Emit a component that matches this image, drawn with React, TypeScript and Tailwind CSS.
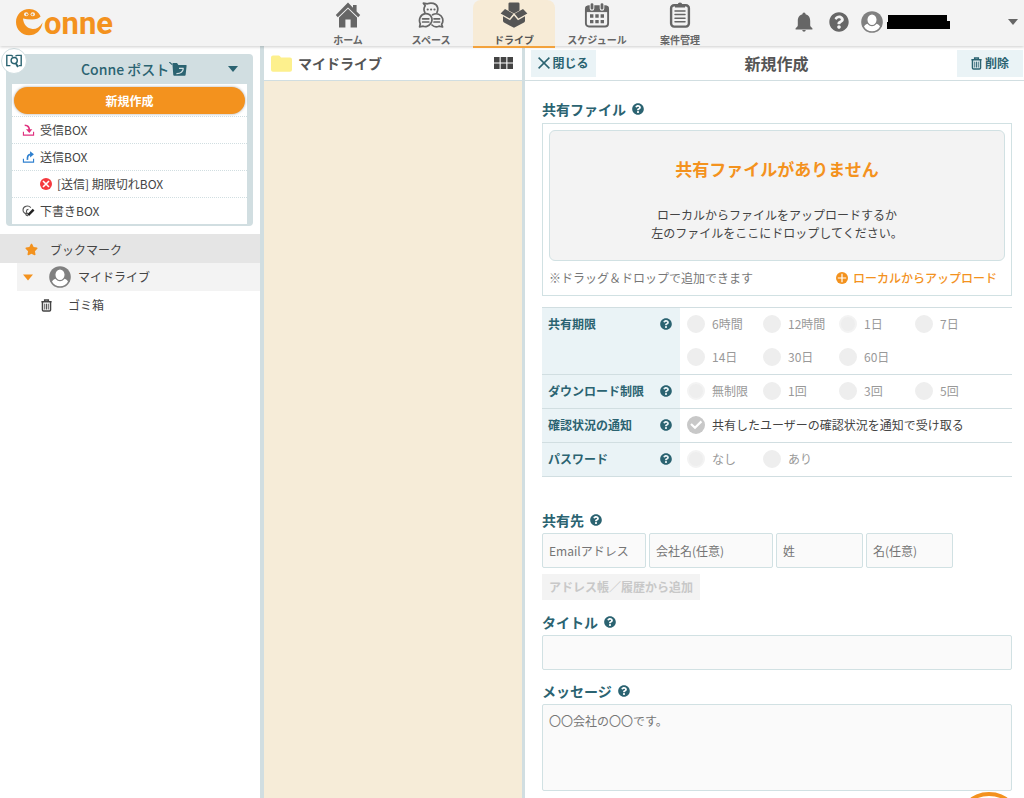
import type { ReactNode } from 'react';
import { FaQuestionCircle, FaStar } from 'react-icons/fa';
import { clsx } from 'clsx';

function HomeIcon() {
  return (
    <svg viewBox="0 0 26 26" className="h-[26px] w-[26px] shrink-0" fill="currentColor">
      <path d="M13 .6 L.8 13 L2.8 15.2 L13 5.4 L23.2 15.2 L25.2 13 L21.6 9.4 V3 H18 V5.8 Z" />
      <path d="M13 6.8 L4 15.6 V25.4 H10.4 V17.4 H15.6 V25.4 H22 V15.6 Z" />
    </svg>
  );
}

function SpaceIcon() {
  return (
    <svg viewBox="0 0 26 26" className="h-[26px] w-[26px] shrink-0" fill="none" stroke="currentColor" strokeWidth="1.7" strokeLinejoin="round" strokeLinecap="round">
      <path d="M6.8 10.4 C5.6 8 5.8 5.6 7.2 3.8 L5.4 1.2 L9.4 1.8 C13 .2 18.4 1.2 19.6 5.4 C20.2 7.6 19.6 9 19 10.4" />
      <path d="M1.6 24.8 L2.3 21.8 C.2 17.6 2.4 12.2 7.4 11.7 C13.2 11.4 15.6 17.3 12.7 21.6 C10.6 24.8 7 25 5.2 24.2 Z" />
      <path d="M14.6 12.8 C18.6 10.4 23.4 12.4 24.6 16.6 C25.2 19 24.6 21 23.6 22.2 L24.6 25 L21 24.2 C18.4 25.2 15.6 24.6 14 23" />
      <path d="M4.6 16.8 H10.8 M4.6 20 H10.8 M16 16.8 H21.6 M16 20 H21.6" />
      <path d="M9.6 7.6 H9.8 M13 7.6 H13.2 M16.4 7.6 H16.6" strokeWidth="2" />
    </svg>
  );
}

function DriveIcon() {
  return (
    <svg viewBox="0 0 28 26" className="h-[26px] w-7 shrink-0" fill="currentColor">
      <path d="M8.5 1.8 Q8.5 .4 9.9 .4 H18.1 Q19.5 .4 19.5 1.8 V8.4 L14 11.4 L8.5 8.4 Z" />
      <path d="M5 6.9 L13.4 11.8 L9.6 16.6 L.6 11.6 Z M23 6.9 L14.6 11.8 L18.4 16.6 L27.4 11.6 Z" />
      <path d="M3 14.2 L10 18.2 L14 13.4 L18 18.2 L25 14.2 V18.8 Q25 20 24 20.6 L14 25.8 L4 20.6 Q3 20 3 18.8 Z" />
    </svg>
  );
}

function CalendarIcon() {
  return (
    <svg viewBox="0 0 26 26" className="h-[26px] w-[26px] shrink-0" fill="none" stroke="currentColor">
      <rect x="1.9" y="4.1" width="22.2" height="20.4" rx="3" strokeWidth="1.9" />
      <path d="M2 4.6 H24 V9.6 H2 Z" fill="currentColor" />
      <path d="M8 2.6 V6.4 M18 2.6 V6.4" stroke="#f3f3f3" strokeWidth="4.6" strokeLinecap="round" />
      <path d="M8 2.6 V6.2 M18 2.6 V6.2" strokeWidth="2.8" strokeLinecap="round" />
      <path d="M6 14 H20 M6 19.6 H20" strokeWidth="3.4" strokeDasharray="3.4 1.9" />
    </svg>
  );
}

function ClipboardIcon() {
  return (
    <svg viewBox="0 0 22 26" className="h-[26px] w-[22px] shrink-0" fill="none" stroke="currentColor">
      <rect x="2.1" y="3.2" width="17.8" height="21.4" rx="3" strokeWidth="2.4" />
      <path d="M6 5.6 V2.8 H8.6 Q9 .4 11 .4 Q13 .4 13.4 2.8 H16 V5.6 Z" fill="currentColor" stroke="none" />
      <path d="M6 9 H16 M6 12.6 H16 M6 16.2 H16 M6 19.8 H16" strokeWidth="1.5" strokeLinecap="round" />
    </svg>
  );
}

function BellIcon() {
  return (
    <svg viewBox="0 0 18 20" className="h-5 w-[18px]" fill="currentColor">
      <path d="M9 .4 Q10.6 .4 10.6 2.2 C14 3 15.2 5.8 15.2 9 V13.6 Q15.2 14.6 17.4 16.2 V17.4 H.6 V16.2 Q2.8 14.6 2.8 13.6 V9 C2.8 5.8 4 3 7.4 2.2 Q7.4 .4 9 .4 Z M7.2 18 H10.8 Q10.6 19.8 9 19.8 Q7.4 19.8 7.2 18 Z" />
    </svg>
  );
}

function AvatarIcon() {
  return (
    <svg viewBox="0 0 22 22" className="h-[22px] w-[22px] text-[#808080]">
      <circle cx="11" cy="11" r="10.8" fill="currentColor" />
      <path d="M11 20.2 C7.4 20.2 4.4 18.2 3 15.4 C4.4 13.4 6.2 12.6 7.6 12.6 H14.4 C15.8 12.6 17.6 13.4 19 15.4 C17.6 18.2 14.6 20.2 11 20.2 Z" fill="#fff" />
      <ellipse cx="11" cy="8.7" rx="5.2" ry="5.9" fill="#fff" stroke="currentColor" strokeWidth="1.3" />
    </svg>
  );
}

function TrashIcon() {
  return (
    <svg viewBox="0 0 12 14" className="h-[13px] w-[11px]" fill="none" stroke="currentColor" strokeWidth="1.6">
      <path d="M.4 3 H11.6 M4 2.6 V1 H8 V2.6 M1.6 3.4 V12 Q1.6 13.1 2.8 13.1 H9.2 Q10.4 13.1 10.4 12 V3.4" />
      <path d="M4.1 5 V11.4 M6 5 V11.4 M7.9 5 V11.4" strokeWidth="1" />
    </svg>
  );
}

function Caret({ className }: { className?: string }) {
  return (
    <svg viewBox="0 0 12 7" className={clsx('h-[6px] w-[10px]', className)} fill="currentColor">
      <path d="M0 0 H12 L6 7 Z" />
    </svg>
  );
}

function InboxIcon() {
  return (
    <svg viewBox="0 0 13 13" className="h-3 w-[13px]" fill="none" stroke="#e0307f" strokeWidth="1.8">
      <path d="M1 8.4 V12 H12 V8.4" strokeWidth="1.2" />
      <path d="M2.4 1.4 Q7.6 1.6 7.4 7" />
      <path d="M3.8 5.6 L7.4 9.8 L10.6 5.6 Z" fill="#e0307f" stroke="none" />
    </svg>
  );
}

function OutboxIcon() {
  return (
    <svg viewBox="0 0 13 13" className="h-3 w-[13px]" fill="none" stroke="#2f80cf" strokeWidth="1.8">
      <path d="M1 8.4 V12 H12 V8.4" strokeWidth="1.2" />
      <path d="M5.4 9.6 Q4.8 3.6 9 3.6" />
      <path d="M8.2 .2 L12.4 3.6 L8.2 7 Z" fill="#2f80cf" stroke="none" />
    </svg>
  );
}

function ExpiredIcon() {
  return (
    <svg viewBox="0 0 12 12" className="h-3 w-3">
      <circle cx="6" cy="6" r="6" fill="#f5393f" />
      <path d="M3 3 L9 9 M9 3 L3 9" stroke="#fff" strokeWidth="1.6" />
    </svg>
  );
}

function DraftIcon() {
  return (
    <svg viewBox="0 0 13 12" className="h-3 w-[13px]" fill="none" stroke="#555">
      <path d="M8.8 2.6 C6.4 -.2 1 1 1 5 C1 8 3.6 9 5.4 8.4 C4 7.4 4 4.4 6.4 4.4 M3.4 9 Q4.4 11 6 10.6" strokeWidth="1.1" />
      <path d="M6.2 10.2 L11.6 4.6" stroke="#222" strokeWidth="2.4" />
    </svg>
  );
}

function Help() {
  return (
    <button type="button" aria-label="ヘルプ" className="shrink-0">
      <FaQuestionCircle className="h-3 w-3 text-[#2b6371]" />
    </button>
  );
}

const navItems = [
  { label: 'ホーム', icon: HomeIcon },
  { label: 'スペース', icon: SpaceIcon },
  { label: 'ドライブ', icon: DriveIcon, active: true },
  { label: 'スケジュール', icon: CalendarIcon },
  { label: '案件管理', icon: ClipboardIcon },
];

function Header() {
  return (
    <header className="z-10 flex h-[46px] shrink-0 items-start bg-[#f3f3f3] shadow-[0_1px_3px_rgba(0,0,0,0.2)]">
      <a href="#" aria-label="Conne" className="flex h-[46px] w-[307px] shrink-0 pl-4 text-[#f3921e]">
        <svg viewBox="0 0 27 27" className="mt-[9px] h-[27px] w-[27px]" fill="currentColor">
          <path d="M24.6 7.6 C23 3 18.4 0 13.2 0 C5.6 0 0 5.8 0 13 C0 20.4 5.6 26.2 13 26.2 C20 26.2 25.4 21.4 26.6 13.4 C23.8 18 20.4 20.2 16.6 20 C11 19.6 7.4 15.4 7 9.6 Q10.6 10.6 16 10.6 Q22 10.6 24.6 7.6 Z" />
          <ellipse cx="10.2" cy="5.2" rx="2.2" ry="2" fill="#f3f3f3" />
          <ellipse cx="16.8" cy="5.2" rx="2.2" ry="2" fill="#f3f3f3" />
          <circle cx="10.8" cy="5.5" r="1" />
          <circle cx="16.4" cy="5.5" r="1" />
        </svg>
        <span className="ml-px font-['Roboto',sans-serif] text-[31px] leading-[48px] font-bold">onne</span>
      </a>
      <nav className="flex gap-px">
        {navItems.map((item) => (
          <a
            key={item.label}
            href="#"
            className={clsx(
              'flex h-12 w-[82px] flex-col items-center gap-1 pt-[2px] text-[10px] font-bold',
              item.active ? 'rounded-t-lg border-b-2 border-[#f3a23c] bg-[#f7ebd6] text-[#555]' : 'text-[#666]'
            )}
          >
            <item.icon />
            <span className="shrink-0 leading-4">{item.label}</span>
          </a>
        ))}
      </nav>
      <div className="ml-auto flex h-11 items-center text-[#666]">
        <button type="button" aria-label="通知">
          <BellIcon />
        </button>
        <button type="button" aria-label="ヘルプ" className="ml-4">
          <FaQuestionCircle className="h-5 w-5" />
        </button>
        <button type="button" aria-label="アカウント" className="ml-3 flex items-center pr-[6px]">
          <AvatarIcon />
          <svg viewBox="0 0 63 15" className="ml-1 h-[15px] w-[63px]" fill="#000">
            <path d="M1 0 H60 V6 H63 V14 H0 V7 H1 Z" />
          </svg>
          <Caret className="ml-[58px]" />
        </button>
      </div>
    </header>
  );
}

const boxes = [
  { label: '受信BOX', icon: InboxIcon },
  { label: '送信BOX', icon: OutboxIcon },
  { label: '[送信] 期限切れBOX', icon: ExpiredIcon, nested: true },
  { label: '下書きBOX', icon: DraftIcon },
];

function Sidebar() {
  return (
    <aside className="w-[264px] shrink-0 border-r-4 border-[#d1dee1] pt-2">
      <section className="relative ml-[6px] w-[247px] rounded-[4px] bg-[#d1dee1] px-[6px] pb-[2px]">
        <button
          type="button"
          aria-label="検索"
          className="absolute -top-[6px] -left-[5px] flex h-[26px] w-[26px] items-center justify-center rounded-full border border-[#d1dee1] bg-white text-[#2b6371]"
        >
          <svg viewBox="0 0 16 14" className="h-[14px] w-4" fill="none" stroke="currentColor" strokeWidth="1.4">
            <path d="M4.4 11.6 H.8 V1.4 H5.4 L7 2.4 M9.4 2.2 L11 1.4 H15.2 V11.6 H12.6" />
            <circle cx="8.2" cy="6.6" r="3.1" />
            <path d="M9.8 9.2 L12 13" strokeWidth="1.9" />
          </svg>
        </button>
        <button type="button" className="flex h-[30px] w-full items-center pr-[9px] pl-[69px] text-sm font-medium text-[#2b6371]">
          Conne ポスト
          <svg viewBox="0 0 18 14" className="h-[14px] w-[18px]" fill="currentColor">
            <path d="M3.4 1.8 Q3.4 1 4.2 1 H8 L9.4 3 H17 Q17.8 3 17.6 3.8 L16.6 13 Q16.5 13.8 15.7 13.8 H5.2 Q4.4 13.8 4.3 13 Z" />
            <path d="M.2 0 L3.2 2.6" stroke="currentColor" strokeWidth="1.2" />
            <path d="M7.4 11.6 Q13.6 11.8 14.4 6.4 M10 6.4 H14.6" fill="none" stroke="#d1dee1" strokeWidth="1.2" />
          </svg>
          <Caret className="ml-auto" />
        </button>
        <div className="bg-white">
          <div className="px-[2px] pt-[3px] pb-[2px]">
            <button type="button" className="block h-[27px] w-full rounded-full bg-[#f3921e] text-xs font-bold text-white shadow-[0_0_3px_rgba(0,0,0,0.35)]">
              新規作成
            </button>
          </div>
          <ul>
            {boxes.map((box) => (
              <li key={box.label} className="border-t border-dotted border-[#d1dee1]">
                <a
                  href="#"
                  className={clsx('flex h-[26px] items-center gap-[5px] text-xs text-[#444]', box.nested ? 'pl-7' : 'pl-[10px]')}
                >
                  <box.icon />
                  {box.label}
                </a>
              </li>
            ))}
          </ul>
        </div>
      </section>
      <nav className="mt-2 text-xs text-[#444]">
        <a href="#" className="flex h-[29px] items-center gap-3 bg-[#e5e5e5] pt-[2px] pl-[25px]">
          <FaStar className="h-[13px] w-[13px] text-[#f3921e]" />
          ブックマーク
        </a>
        <a href="#" className="ml-[17px] flex h-7 items-center bg-[#f3f3f3] pl-[6px]">
          <Caret className="h-[7px] w-3 text-[#f3921e]" />
          <span className="mr-[7px] ml-4">
            <AvatarIcon />
          </span>
          マイドライブ
        </a>
        <a href="#" className="flex h-7 items-center gap-4 pl-[41px]">
          <TrashIcon />
          ゴミ箱
        </a>
      </nav>
    </aside>
  );
}

function FolderPane() {
  return (
    <section className="flex w-[261px] shrink-0 flex-col border-r-[3px] border-[#d1dee1] bg-[#f6ecd8]">
      <div className="flex h-[35px] shrink-0 items-center border-b border-[#d1dee1] bg-white pr-[9px] pl-[7px]">
        <svg viewBox="0 0 21 17" className="h-[17px] w-[21px]" fill="#fdf08d">
          <path d="M0 2.4 Q0 .4 2 .4 H7.6 Q8.6 .4 9.2 1.4 L10 2.4 H19 Q21 2.4 21 4.4 V14.8 Q21 16.8 19 16.8 H2 Q0 16.8 0 14.8 Z" />
        </svg>
        <h2 className="ml-[6px] text-sm font-bold text-[#555]">マイドライブ</h2>
        <button type="button" aria-label="表示切替" className="ml-auto text-[#444]">
          <svg viewBox="0 0 19 12" className="h-3 w-[19px]" fill="currentColor">
            <path d="M0 0 H5.6 V5.5 H0 Z M6.7 0 H12.3 V5.5 H6.7 Z M13.4 0 H19 V5.5 H13.4 Z M0 6.5 H5.6 V12 H0 Z M6.7 6.5 H12.3 V12 H6.7 Z M13.4 6.5 H19 V12 H13.4 Z" />
          </svg>
        </button>
      </div>
    </section>
  );
}

function SectionTitle({ children, htmlFor }: { children: ReactNode; htmlFor?: string }) {
  return (
    <div className="flex h-6 items-center gap-[6px] text-sm font-bold text-[#2b6371]">
      {htmlFor ? <label htmlFor={htmlFor}>{children}</label> : <h3>{children}</h3>}
      <Help />
    </div>
  );
}

function SettingRow({ title, children }: { title: string; children: ReactNode }) {
  return (
    <tr className="border-b border-[#d1dee1]">
      <th scope="row" className="w-[138px] bg-[#eaf3f6] pt-[6px] pr-2 pb-[7px] pl-[6px] text-left align-top font-bold text-[#2b6371]">
        <div className="flex h-5 items-center justify-between whitespace-nowrap">
          {title}
          <Help />
        </div>
      </th>
      <td className="pt-[6px] pb-[7px] pl-[7px] align-top">{children}</td>
    </tr>
  );
}

function RadioGroup({ name, options, selected }: { name: string; options: string[]; selected: string }) {
  return (
    <div className="flex max-w-[310px] flex-wrap gap-y-[13px]">
      {options.map((option) => (
        <label key={option} className="flex h-5 w-[76px] items-center gap-[7px] whitespace-nowrap text-[#999]">
          <input
            type="radio"
            name={name}
            disabled
            defaultChecked={option === selected}
            className="h-[18px] w-[18px] shrink-0 appearance-none rounded-full border-2 border-[#eee] bg-[#eee] checked:border-[#f3f3f3]"
          />
          {option}
        </label>
      ))}
    </div>
  );
}

const recipientFields = [
  { placeholder: 'Emailアドレス', width: 'w-[104px]' },
  { placeholder: '会社名(任意)', width: 'w-[124px]' },
  { placeholder: '姓', width: 'w-[87px]' },
  { placeholder: '名(任意)', width: 'w-[87px]' },
];

const FIELD = 'rounded-[2px] border border-[#d1e1e3] bg-[#fafafa] px-[6px] text-xs text-[#444] placeholder:text-[#757575]';

function SharePane() {
  return (
    <main className="min-w-0 flex-1">
      <div className="flex h-[35px] items-center justify-between border-b border-[#d1dee1] pl-[6px] pr-px text-xs font-bold text-[#2b6371]">
        <button type="button" className="flex h-[27px] w-[65px] items-center justify-center gap-[2px] bg-[#eaf3f6]">
          <svg viewBox="0 0 12 12" className="h-3 w-3" stroke="currentColor" strokeWidth="1.5">
            <path d="M.6 .6 L11.4 11.4 M11.4 .6 L.6 11.4" />
          </svg>
          閉じる
        </button>
        <h1 className="text-base text-[#555]">新規作成</h1>
        <button type="button" className="flex h-[27px] w-[66px] items-center justify-center gap-[3px] bg-[#eaf3f6]">
          <TrashIcon />
          削除
        </button>
      </div>

      <form className="pt-4 pr-3 pl-[17px] text-xs">
        <SectionTitle>共有ファイル</SectionTitle>
        <div className="mt-[2px] border border-[#d1e1e3] px-[6px] pt-[6px]">
          <div className="flex h-[131px] flex-col items-center rounded-md border border-[#d1e1e3] bg-[#f3f3f3] pt-[26px] text-center">
            <p className="text-[17px] leading-6 font-bold text-[#f3921e]">共有ファイルがありません</p>
            <p className="mt-[25px] leading-[18px] text-[#444]">
              ローカルからファイルをアップロードするか
              <br />
              左のファイルをここにドロップしてください。
            </p>
          </div>
          <div className="flex h-[34px] items-center justify-between pr-2">
            <p className="text-[#777]">※ドラッグ＆ドロップで追加できます</p>
            <button type="button" className="flex items-center gap-[5px] font-medium text-[#f3921e]">
              <svg viewBox="0 0 12 12" className="h-3 w-3">
                <circle cx="6" cy="6" r="6" fill="currentColor" />
                <path d="M6 1.8 V10.2 M1.8 6 H10.2" stroke="#fff" strokeWidth="1.2" />
              </svg>
              ローカルからアップロード
            </button>
          </div>
        </div>

        <table className="mt-[11px] w-full table-fixed border-collapse border-t border-[#d1dee1]">
          <tbody>
            <SettingRow title="共有期限">
              <RadioGroup name="expire" selected="1日" options={['6時間', '12時間', '1日', '7日', '14日', '30日', '60日']} />
            </SettingRow>
            <SettingRow title="ダウンロード制限">
              <RadioGroup name="limit" selected="無制限" options={['無制限', '1回', '3回', '5回']} />
            </SettingRow>
            <SettingRow title="確認状況の通知">
              <label className="relative flex h-5 items-center gap-[7px] whitespace-nowrap text-[#444]">
                <input type="checkbox" defaultChecked className="h-[18px] w-[18px] appearance-none rounded-full bg-[#c8c8c8]" />
                <svg viewBox="0 0 18 18" className="pointer-events-none absolute left-0 h-[18px] w-[18px]" fill="none" stroke="#fff" strokeWidth="2.2">
                  <path d="M4 8 L8 11.8 L14.4 5.4" />
                </svg>
                共有したユーザーの確認状況を通知で受け取る
              </label>
            </SettingRow>
            <SettingRow title="パスワード">
              <RadioGroup name="password" selected="なし" options={['なし', 'あり']} />
            </SettingRow>
          </tbody>
        </table>

        <div className="mt-[31px]">
          <SectionTitle>共有先</SectionTitle>
          <div className="mt-px flex gap-[3px]">
            {recipientFields.map((field) => (
              <input
                key={field.placeholder}
                type="text"
                aria-label={field.placeholder}
                placeholder={field.placeholder}
                className={clsx(FIELD, 'h-[35px]', field.width)}
              />
            ))}
          </div>
          <button type="button" disabled className="mt-[6px] block h-[26px] bg-[#f3f3f3] px-[7px] font-bold text-[#c8c8c8]">
            アドレス帳／履歴から追加
          </button>
        </div>

        <div className="mt-[10px]">
          <SectionTitle htmlFor="title">タイトル</SectionTitle>
          <input id="title" type="text" className={clsx(FIELD, 'mt-px block h-[35px] w-full')} />
        </div>

        <div className="mt-[9px]">
          <SectionTitle htmlFor="message">メッセージ</SectionTitle>
          <textarea id="message" placeholder="〇〇会社の〇〇です。" className={clsx(FIELD, 'mt-px block h-[87px] w-full resize-none py-2')} />
        </div>
      </form>
    </main>
  );
}

export default function App() {
  return (
    <div className="flex h-screen flex-col overflow-hidden bg-white font-['Noto_Sans_CJK_JP',sans-serif] text-[#444]">
      <Header />
      <div className="flex min-h-0 flex-1">
        <Sidebar />
        <FolderPane />
        <SharePane />
      </div>
      <button
        type="button"
        aria-label="サポート"
        className="fixed right-[2px] -bottom-[60px] h-[66px] w-[66px] rounded-full border-4 border-[#f3921e] bg-white"
      />
    </div>
  );
}
